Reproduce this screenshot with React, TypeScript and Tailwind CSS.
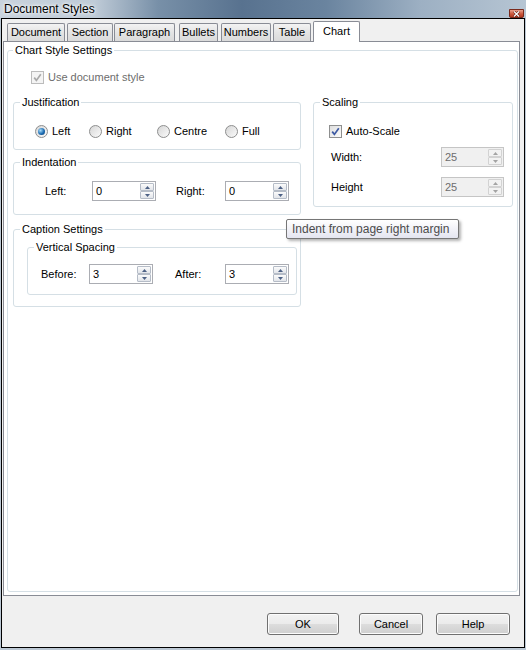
import React from 'react';

const tabs = [
  { label: 'Document', cls: 'ml-[5px] w-[58px]' },
  { label: 'Section', cls: 'ml-[2px] w-[46px]' },
  { label: 'Paragraph', cls: 'ml-px w-[61px]' },
  { label: 'Bullets', cls: 'ml-[4px] w-[39px]' },
  { label: 'Numbers', cls: 'ml-[3px] w-[50px]' },
  { label: 'Table', cls: 'ml-[2px] w-[38px]' },
];

const Arrow = ({ up, color }: { up?: boolean; color: string }) => (
  <svg width="5" height="3" viewBox="0 0 5 3">
    <path d={up ? 'M0 3 L2.5 0 L5 3Z' : 'M0 0 L5 0 L2.5 3Z'} fill={color} />
  </svg>
);

const SpinBtn = ({ up, disabled }: { up?: boolean; disabled?: boolean }) => (
  <div
    className={`flex flex-1 items-center justify-center rounded-[1px] border ${
      disabled
        ? 'border-[#d2d2d2] bg-[#f2f2f2]'
        : 'border-[#b5bcc7] bg-[#eef0f3] bg-[image:linear-gradient(#fbfbfb,#e2e5ea)]'
    }`}
  >
    <Arrow up={up} color={disabled ? '#a3a3a3' : '#4d6185'} />
  </div>
);

const SpinBox = ({ value, disabled, w }: { value: string; disabled?: boolean; w: string }) => (
  <div
    className={`flex h-[20px] ${w} border ${
      disabled ? 'border-[#c5c5c5] bg-[#f0f0f0] text-[#6d6d6d]' : 'border-[#abadb3] bg-white text-black'
    }`}
  >
    <div className="flex flex-1 items-center pl-[3px]">{value}</div>
    <div className="flex w-[15px] flex-col py-px pr-px">
      <SpinBtn up disabled={disabled} />
      <SpinBtn disabled={disabled} />
    </div>
  </div>
);

const Radio = ({ checked }: { checked?: boolean }) => (
  <span className="flex h-[13px] w-[13px] items-center justify-center rounded-full border border-[#8e8f8f] bg-[#ececec] bg-[image:linear-gradient(135deg,#d6d6d6,#fbfbfb)]">
    {checked && (
      <span className="h-[7px] w-[7px] rounded-full bg-[#1c6cb3] bg-[image:radial-gradient(circle_at_35%_35%,#a9dcf8,#1c6cb3_55%,#0b3a6c)]" />
    )}
  </span>
);

const Check = ({ disabled }: { disabled?: boolean }) => (
  <span
    className={`flex h-[13px] w-[13px] items-center justify-center border ${
      disabled
        ? 'border-[#bcbcbc] bg-[#f4f4f4]'
        : 'border-[#8e8f8f] bg-[#eeeeee] bg-[image:linear-gradient(135deg,#dedede,#fbfbfb)]'
    }`}
  >
    <svg width="9" height="9" viewBox="0 0 9 9">
      <path
        d="M1.2 4.6 L3.4 7.4 L7.8 1.2"
        fill="none"
        stroke={disabled ? '#a9a9a9' : '#3d5aa3'}
        strokeWidth="1.7"
      />
    </svg>
  </span>
);

const Group = ({
  label,
  className,
  legend = 'ml-[6px]',
  children,
}: {
  label: string;
  className?: string;
  legend?: string;
  children: React.ReactNode;
}) => (
  <fieldset className={`rounded-[3px] border border-[#d5dfe5] ${className ?? ''}`}>
    <legend className={`${legend} px-[2px] leading-[13px]`}>{label}</legend>
    {children}
  </fieldset>
);

const Button = ({ label, cls }: { label: string; cls: string }) => (
  <button
    className={`h-[22px] ${cls} rounded-[3px] border border-[#707070] bg-[#e2e2e2] bg-[image:linear-gradient(#f2f2f2_0%,#ebebeb_50%,#dddddd_50%,#cfcfcf_100%)] text-[11px] shadow-[inset_0_0_0_1px_#fcfcfc]`}
  >
    {label}
  </button>
);

export default function App() {
  return (
    <div className="relative flex h-[650px] w-[526px] flex-col bg-[#bcc8d4] font-['Liberation_Sans',Arial,sans-serif] text-[11px] leading-[13px] text-black">
      {/* title bar */}
      <div className="flex h-[18px] bg-[#8399b0] bg-[image:linear-gradient(90deg,#c9d3dd_0%,#bfcbd7_18%,#7890a8_30%,#58728f_46%,#6a849f_62%,#9db0c3_80%,#b6c5d3_100%)]">
        <span className="ml-[4px] mt-[2px] text-[12px] leading-[14px] [text-shadow:0_0_5px_#ffffff,0_0_3px_#ffffff]">
          Document Styles
        </span>
        <div className="ml-auto mr-[2px] mt-[9px] flex h-[9px] w-[15px] items-center justify-center rounded-b-[2px] border border-[#7a2a1c] bg-[#c8543a] bg-[image:linear-gradient(#e8a08c,#cc573c_55%,#b03a22)]">
          <svg width="7" height="6" viewBox="0 0 7 6">
            <path d="M1 0.5 L6 5.5 M6 0.5 L1 5.5" stroke="#5a1a10" strokeWidth="2.4" />
            <path d="M1 0.5 L6 5.5 M6 0.5 L1 5.5" stroke="#ffffff" strokeWidth="1.3" />
          </svg>
        </div>
      </div>

      {/* window body */}
      <div className="mx-px mb-[2px] flex flex-1 flex-col border border-black bg-[#f0f0f0]">
        {/* tabs */}
        <div className="relative z-10 mt-[2px] flex h-[20px] items-end">
          {tabs.map(t => (
            <div
              key={t.label}
              className={`${t.cls} flex h-[18px] items-center justify-center rounded-t-[2px] border border-b-0 border-[#898c95] bg-[#e4e4e4] bg-[image:linear-gradient(#f3f3f3,#e4e4e4_50%,#dadada)]`}
            >
              {t.label}
            </div>
          ))}
          <div className="-mb-px ml-[2px] flex h-[21px] w-[47px] items-center justify-center rounded-t-[2px] border border-b-0 border-[#898c95] bg-white pb-[1px]">
            Chart
          </div>
        </div>

        {/* tab panel */}
        <div className="ml-px mr-[4px] flex flex-1 flex-col border border-[#898c95] bg-white">
          <Group label="Chart Style Settings" legend="ml-[5px]" className="mb-[3px] ml-[3px] mr-px mt-[2px] flex-1">
            <div className="mt-[14px] flex items-center gap-[4px] pl-[23px] text-[#6d6d6d]">
              <Check disabled />
              <span>Use document style</span>
            </div>

            <div className="ml-[5px] mt-[12px] flex items-start gap-[12px]">
              {/* left column */}
              <div className="flex w-[288px] flex-col">
                <Group label="Justification" className="pb-[11px] pt-[16px]">
                  <div className="flex pl-[21px]">
                    {[
                      { l: 'Left', w: 'w-[54px]', c: true },
                      { l: 'Right', w: 'w-[68px]', c: false },
                      { l: 'Centre', w: 'w-[68px]', c: false },
                      { l: 'Full', w: 'w-[50px]', c: false },
                    ].map(r => (
                      <label key={r.l} className={`flex ${r.w} items-center gap-[4px]`}>
                        <Radio checked={r.c} />
                        <span>{r.l}</span>
                      </label>
                    ))}
                  </div>
                </Group>

                <Group label="Indentation" className="mt-[6px] pb-[13px] pt-[12px]">
                  <div className="flex items-center pl-[31px]">
                    <span className="w-[47px]">Left:</span>
                    <SpinBox value="0" w="w-[64px]" />
                    <span className="ml-[20px] w-[49px]">Right:</span>
                    <SpinBox value="0" w="w-[64px]" />
                  </div>
                </Group>

                <Group label="Caption Settings" className="mt-[8px] pb-[11px]">
                  <Group label="Vertical Spacing" className="ml-[13px] mr-[3px] mt-[5px] pb-[10px] pt-[10px]">
                    <div className="flex items-center pl-[13px]">
                      <span className="w-[48px]">Before:</span>
                      <SpinBox value="3" w="w-[64px]" />
                      <span className="ml-[22px] w-[50px]">After:</span>
                      <SpinBox value="3" w="w-[64px]" />
                    </div>
                  </Group>
                </Group>
              </div>

              {/* right column */}
              <Group label="Scaling" className="w-[200px] pb-[9px] pt-[16px]">
                <div className="flex items-center gap-[4px] pl-[15px]">
                  <Check />
                  <span>Auto-Scale</span>
                </div>
                <div className="mt-[9px] flex items-center pl-[17px]">
                  <span className="w-[110px]">Width:</span>
                  <SpinBox value="25" disabled w="w-[63px]" />
                </div>
                <div className="mt-[10px] flex items-center pl-[17px]">
                  <span className="w-[110px]">Height</span>
                  <SpinBox value="25" disabled w="w-[63px]" />
                </div>
              </Group>
            </div>
          </Group>
        </div>

        {/* buttons */}
        <div className="flex justify-end pb-[12px] pr-[14px] pt-[17px]">
          <Button label="OK" cls="w-[72px]" />
          <Button label="Cancel" cls="ml-[20px] w-[64px]" />
          <Button label="Help" cls="ml-[13px] w-[74px]" />
        </div>
      </div>

      {/* tooltip */}
      <div className="absolute left-[286px] top-[219px] flex h-[20px] w-[173px] items-center rounded-[2px] border border-[#767676] bg-[#f2f2f6] bg-[image:linear-gradient(#ffffff,#e4e5f0)] pl-[5px] text-[12px] text-[#4c4c4c] shadow-[2px_2px_3px_rgba(0,0,0,0.3)]">
        Indent from page right margin
      </div>
    </div>
  );
}
